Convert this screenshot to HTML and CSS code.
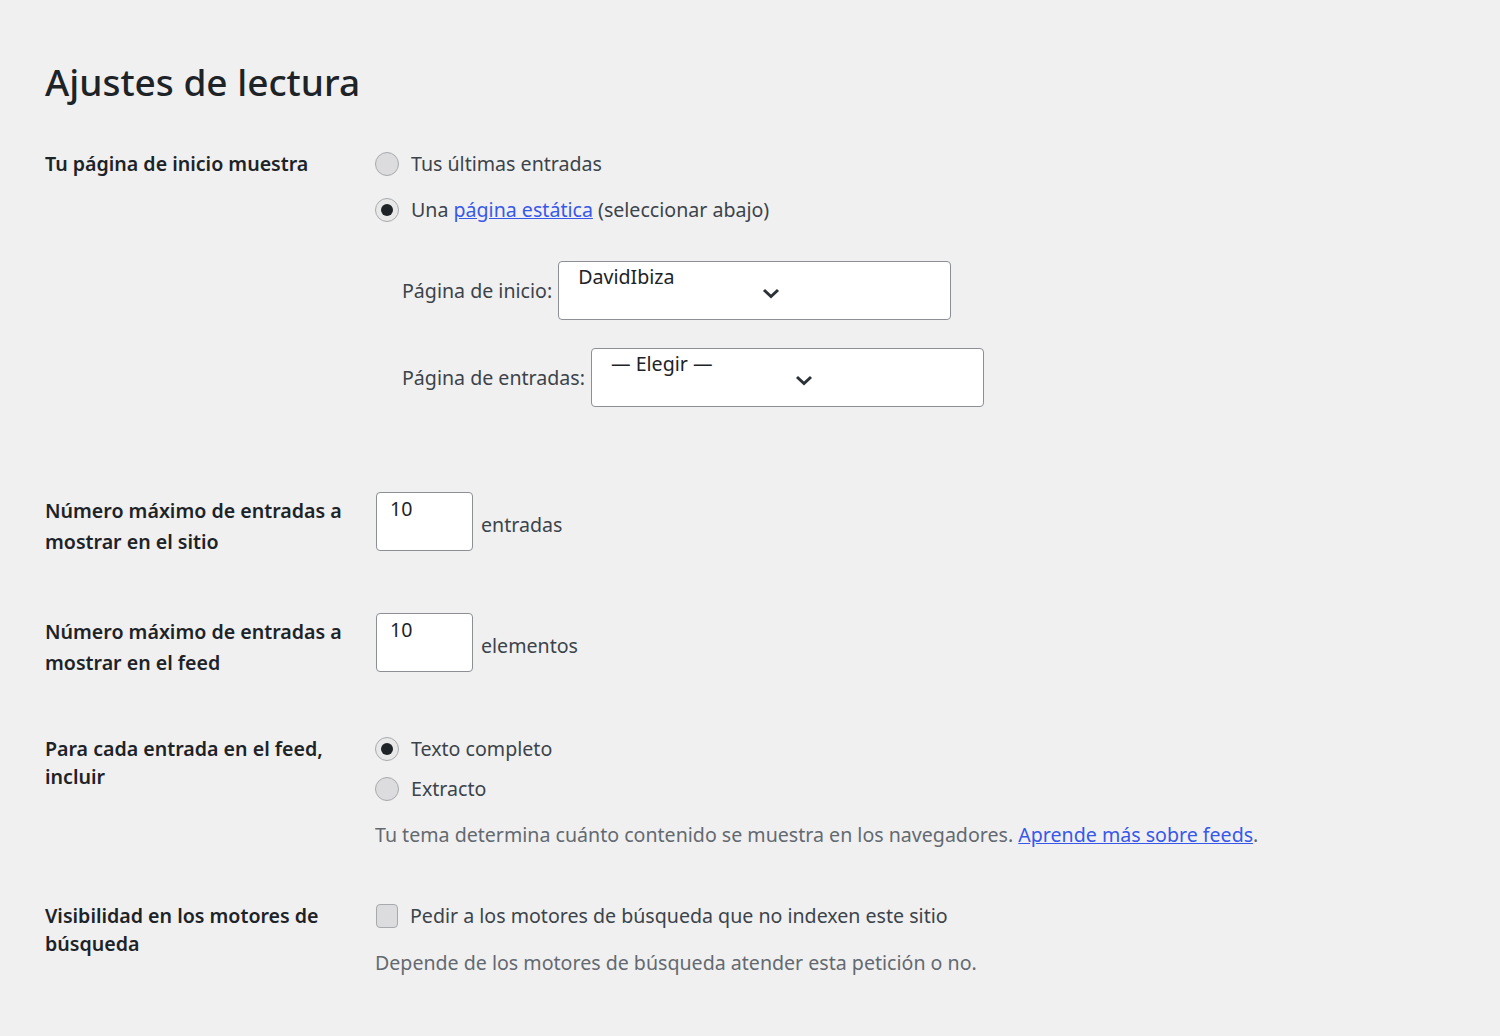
FILE: index.html
```html
<!DOCTYPE html>
<html lang="es">
<head>
  <meta charset="UTF-8">
  <title>Ajustes de lectura</title>
  <link rel="stylesheet" href="styles.css">
</head>
<body>
  <div class="wrap">
    <h1 class="title">Ajustes de lectura</h1>

    <div class="field field--home">
      <div class="field__label">Tu página de inicio muestra</div>
      <div class="field__control">
        <div class="option">
          <span class="radio"></span>
          <span>Tus últimas entradas</span>
        </div>
        <div class="option option--second">
          <span class="radio radio--checked"></span>
          <span>Una <a href="#">página estática</a> (seleccionar abajo)</span>
        </div>

        <div class="pages">
          <div class="pages__row">
            <span>Página de inicio:</span>
            <div class="select">
              <span>DavidIbiza</span>
              <svg class="select__arrow" width="18" height="12" viewBox="0 0 18 12"><path d="M2 3l7 6.5L16 3" fill="none" stroke="#2c3338" stroke-width="3"/></svg>
            </div>
          </div>
          <div class="pages__row">
            <span>Página de entradas:</span>
            <div class="select">
              <span>— Elegir —</span>
              <svg class="select__arrow" width="18" height="12" viewBox="0 0 18 12"><path d="M2 3l7 6.5L16 3" fill="none" stroke="#2c3338" stroke-width="3"/></svg>
            </div>
          </div>
        </div>
      </div>
    </div>

    <div class="field field--number">
      <div class="field__label field__label--tall">Número máximo de entradas a mostrar en el sitio</div>
      <div class="field__control inline">
        <div class="number">10</div>
        <span class="unit">entradas</span>
      </div>
    </div>

    <div class="field field--feed">
      <div class="field__label field__label--tall">Número máximo de entradas a mostrar en el feed</div>
      <div class="field__control inline">
        <div class="number">10</div>
        <span class="unit">elementos</span>
      </div>
    </div>

    <div class="field field--content">
      <div class="field__label">Para cada entrada en el feed, incluir</div>
      <div class="field__control">
        <div class="option">
          <span class="radio radio--checked"></span>
          <span>Texto completo</span>
        </div>
        <div class="option option--close">
          <span class="radio"></span>
          <span>Extracto</span>
        </div>
        <p class="description">Tu tema determina cuánto contenido se muestra en los navegadores. <a href="#">Aprende más sobre feeds</a>.</p>
      </div>
    </div>

    <div class="field field--visibility">
      <div class="field__label">Visibilidad en los motores de búsqueda</div>
      <div class="field__control">
        <div class="option">
          <span class="checkbox"></span>
          <span>Pedir a los motores de búsqueda que no indexen este sitio</span>
        </div>
        <p class="description description--low">Depende de los motores de búsqueda atender esta petición o no.</p>
      </div>
    </div>
  </div>
</body>
</html>
```

FILE: styles.css
```css
* {
  box-sizing: border-box;
}

body {
  margin: 0;
  background: #f0f0f1;
  color: #3c434a;
  font-family: "Noto Sans", "Open Sans", sans-serif;
  font-size: 19.6px;
  line-height: 28px;
}

.wrap {
  padding: 0 45px;
}

.title {
  margin: 0;
  padding-top: 59px;
  font-size: 37px;
  line-height: 46px;
  font-weight: 500;
  color: #1d2327;
}

a {
  color: #3858e9;
}

/* form rows */

.field {
  display: grid;
  grid-template-columns: 330px 1fr;
}

.field--home {
  margin-top: 45px;
}

.field--number {
  margin-top: 85px;
}

.field--feed {
  margin-top: 56px;
}

.field--content {
  margin-top: 57px;
}

.field--visibility {
  margin-top: 53px;
}

.field__label {
  color: #1d2327;
  font-weight: 600;
}

.field__label--tall {
  line-height: 31px;
  padding-top: 3px;
}

.field__control {
  display: flex;
  flex-direction: column;
  align-items: flex-start;
}

.inline {
  flex-direction: row;
  align-items: flex-start;
  gap: 8px;
}

/* radios / checkbox */

.option {
  display: flex;
  align-items: center;
  gap: 12px;
}

.option--second {
  margin-top: 18px;
}

.option--close {
  margin-top: 12px;
}

.radio {
  width: 24px;
  height: 24px;
  border-radius: 50%;
  border: 1.5px solid #a7aaad;
  background: #dcdcde;
  display: flex;
  align-items: center;
  justify-content: center;
}

.radio--checked {
  background: #e8e8e9;
}

.radio--checked::after {
  content: "";
  width: 12px;
  height: 12px;
  border-radius: 50%;
  background: #1d2327;
}

.checkbox {
  margin-left: 1px;
  width: 22px;
  height: 24px;
  border-radius: 4px;
  border: 1.5px solid #a7aaad;
  background: #dcdcde;
}

/* page selects */

.pages {
  margin-top: 37px;
  margin-left: 27px;
  display: flex;
  flex-direction: column;
  gap: 28px;
}

.pages__row {
  display: flex;
  align-items: center;
  gap: 6px;
}

.select {
  position: relative;
  width: 393px;
  height: 59px;
  padding: 1px 19px;
  background: #fff;
  border: 1px solid #8c8f94;
  border-radius: 4px;
  color: #1d2327;
}

.select__arrow {
  position: absolute;
  left: 203px;
  top: 25px;
}

/* number inputs */

.number {
  margin-left: 1px;
  width: 97px;
  height: 59px;
  padding: 2px 13px 0;
  background: #fff;
  border: 1px solid #8c8f94;
  border-radius: 4px;
  color: #1d2327;
}

.unit {
  margin-top: 19px;
}

.description {
  margin: 18px 0 0;
  color: #646970;
}

.description--low {
  margin-top: 19px;
}
```
